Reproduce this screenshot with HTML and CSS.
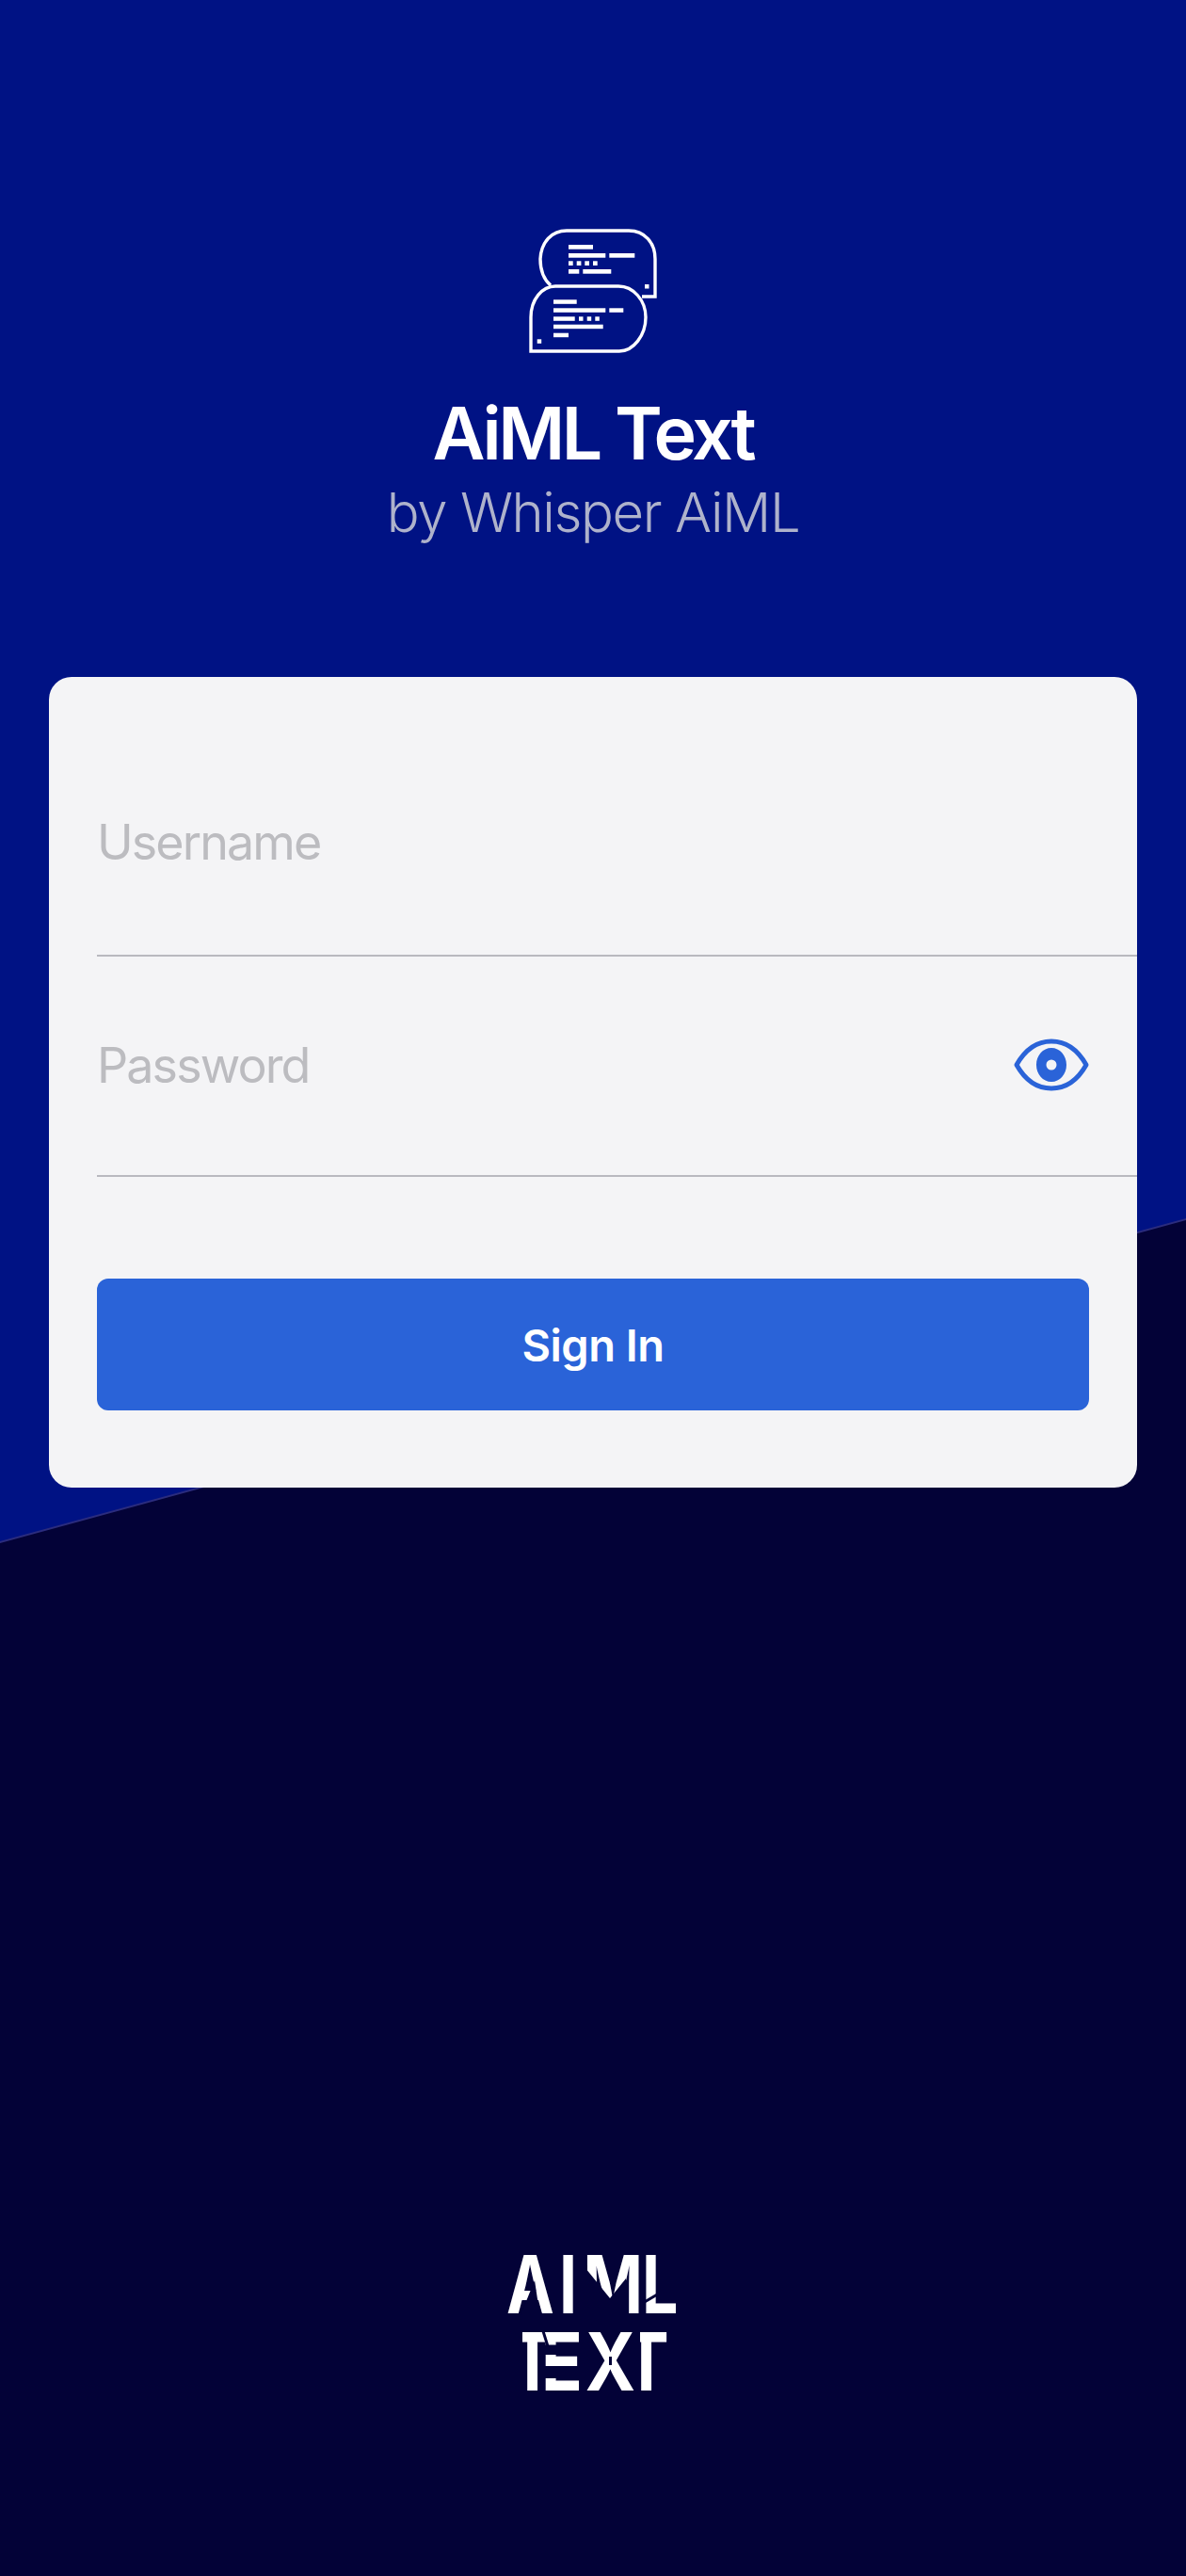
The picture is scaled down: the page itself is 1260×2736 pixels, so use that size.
FILE: index.html
```html
<!DOCTYPE html>
<html lang="en">
	<head>
		<meta charset="UTF-8" />
		<meta name="viewport" content="width=device-width, initial-scale=1.0" />
		<title>AiML Text</title>
		<link rel="stylesheet" href="styles.css">
	</head>
	<body>
		<div class="wash-edge"></div>
		<div class="top-wash"></div>
		<div class="container">
			<header class="brand">
				<svg class="brand-icon" width="140" height="134" viewBox="0 0 140 134" aria-hidden="true">
					<g fill="none" stroke="#fff" stroke-width="3.4">
						<path d="M25 61 C18 55 14 45 14 33 C15 15 26 3 42 3 H108 C125 3 136 16 136 33 V73 H122" />
						<path d="M4 131 V95 C4 76 16 62 30 62 H97 C113 62 126 77 126 95 C126 114 113 131 98 131 Z" />
					</g>
					<g fill="#fff">
						<rect x="44" y="18" width="26" height="4.7" />
						<rect x="44" y="27" width="39.3" height="4.7" />
						<rect x="87.3" y="27" width="27" height="4.7" />
						<rect x="44" y="35.3" width="4.7" height="4.7" />
						<rect x="52.7" y="35.3" width="4.7" height="4.7" />
						<rect x="61.3" y="35.3" width="4.7" height="4.7" />
						<rect x="70" y="35.3" width="4.7" height="4.7" />
						<rect x="44" y="44" width="11.3" height="4.7" />
						<rect x="59.3" y="44" width="30" height="4.7" />
						<rect x="125" y="60" width="4.5" height="4.5" />
						<rect x="28" y="76.3" width="24.7" height="4.5" />
						<rect x="28" y="85.3" width="55.3" height="4.5" />
						<rect x="87.3" y="85.3" width="15" height="4.5" />
						<rect x="28" y="94.3" width="22.7" height="4.5" />
						<rect x="55" y="94.3" width="4.5" height="4.5" />
						<rect x="63.7" y="94.3" width="4.5" height="4.5" />
						<rect x="72.3" y="94.3" width="4.5" height="4.5" />
						<rect x="28" y="102.7" width="52.7" height="4.5" />
						<rect x="28" y="111.7" width="16" height="4.5" />
						<rect x="10.7" y="118.3" width="4.5" height="4.5" />
					</g>
				</svg>
				<h1 class="brand-title">AiML Text</h1>
				<p class="brand-sub">by Whisper AiML</p>
			</header>

			<form class="card">
				<div class="field field-user">
					<span class="field-label">Username</span>
				</div>
				<div class="field field-pass">
					<span class="field-label">Password</span>
					<svg class="eye" width="80" height="58" viewBox="0 0 80 58" aria-hidden="true">
						<path d="M3 29 C12 13 25 4 40 4 C55 4 68 13 77 29 C68 45 55 54 40 54 C25 54 12 45 3 29 Z" fill="none" stroke="#2a63d8" stroke-width="5" stroke-linejoin="round" />
						<path fill-rule="evenodd" fill="#2a63d8" d="M40 11 C49 11 56 19 56 29 C56 39 49 47 40 47 C31 47 24 39 24 29 C24 19 31 11 40 11 Z M40 23.5 A5.5 5.5 0 1 0 40 34.5 A5.5 5.5 0 1 0 40 23.5 Z" />
					</svg>
				</div>
				<button class="sign-in" type="button">Sign In</button>
			</form>

			<footer class="foot-logo">
				<svg width="200" height="150" viewBox="0 0 200 150" role="img" aria-label="AI ML Text">
					<defs>
						<clipPath id="last-t"><rect x="150" y="70" width="50" height="80" /></clipPath>
					</defs>
					<g clip-path="url(#last-t)">
						<text class="logo-text" transform="scale(.85 1)" x="156" y="145">T</text>
					</g>
					<text class="logo-text" transform="scale(.8 1)" x="10 80 95 112 190" y="63">AI ML</text>
					<text class="logo-text" transform="scale(.85 1)" x="13.5 53 108" y="145">TEX</text>
					<!-- stencil cuts -->
					<g class="logo-cut">
						<polygon points="38,28 23,65 46,65 41,48" />
						<polygon points="85,15 92,15 118,47 135,26 135,65 85,65" />
						<rect x="0" y="80" width="25" height="20" />
						<rect x="48" y="96.5" width="18" height="10.5" />
						<rect x="48" y="119" width="18" height="13" />
					</g>
					<g class="logo-slit">
						<line x1="153" y1="52" x2="170" y2="42" />
						<line x1="47" y1="82" x2="52" y2="98" />
						<line x1="118.5" y1="109" x2="118.5" y2="118" />
					</g>
				</svg>
			</footer>
		</div>
	</body>
</html>
```

FILE: styles.css
```css
* {
	padding: 0;
	margin: 0;
	box-sizing: border-box;
}
body {
	position: relative;
	height: 2736px;
	overflow: hidden;
	background-color: #030237;
	font-family: Inter, "Noto Sans", sans-serif;
}
.top-wash,
.wash-edge {
	position: absolute;
	top: 0;
	left: 0;
	right: 0;
}
.top-wash {
	height: 1637px;
	background-color: #001284;
	clip-path: polygon(0 0, 100% 0, 100% 1294px, 0 100%);
}
.wash-edge {
	height: 1639px;
	background-color: #2b2c7e;
	clip-path: polygon(0 0, 100% 0, 100% 1296px, 0 100%);
}
.container {
	position: relative;
	display: flex;
	flex-direction: column;
	align-items: center;
	padding-top: 242px;
}
.brand {
	display: flex;
	flex-direction: column;
	align-items: center;
}
.brand-icon {
	display: block;
}
.brand-title {
	margin-top: 38px;
	font-size: 77px;
	line-height: 92px;
	font-weight: 600;
	letter-spacing: -3.4px;
	color: #fff;
}
.brand-sub {
	margin-top: 2px;
	font-size: 58px;
	line-height: 72px;
	font-weight: 300;
	letter-spacing: -1.4px;
	color: #aeb2cb;
}
.card {
	width: 1156px;
	margin-top: 139px;
	padding: 63px 0 82px 51px;
	background-color: #f4f4f6;
	border-radius: 24px;
}
.field {
	display: flex;
	align-items: center;
	justify-content: space-between;
	height: 234px;
	padding-right: 51px;
	border-bottom: 2px solid #b9b9bf;
}
.field-user {
	padding-bottom: 8px;
}
.field-pass {
	padding-bottom: 2px;
}
.field-label {
	font-size: 52px;
	font-weight: 400;
	letter-spacing: -1.9px;
	color: #bcbcc0;
}
.sign-in {
	display: block;
	width: 1054px;
	height: 140px;
	margin-top: 108px;
	background-color: #2a63d8;
	border: none;
	border-radius: 12px;
	font-family: inherit;
	font-size: 47px;
	font-weight: 600;
	letter-spacing: -0.5px;
	color: #fff;
}
.foot-logo {
	margin-top: 814px;
}
.foot-logo svg {
	display: block;
	overflow: visible;
}
.logo-text {
	font-family: Inter, sans-serif;
	font-size: 85px;
	font-weight: 700;
	fill: #fff;
}
.logo-cut {
	fill: #030237;
}
.logo-slit {
	stroke: #030237;
	stroke-width: 3;
}
```
